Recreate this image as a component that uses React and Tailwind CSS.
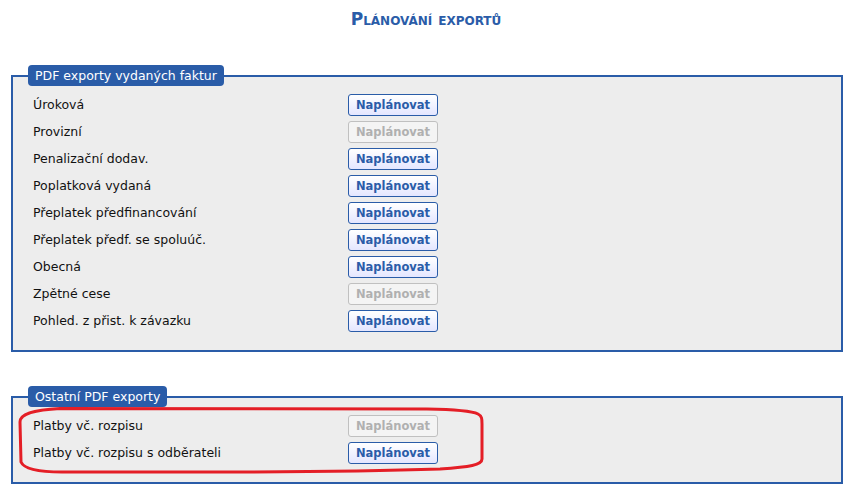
import React from "react";

const rows1 = [
  ["Úroková", true],
  ["Provizní", false],
  ["Penalizační dodav.", true],
  ["Poplatková vydaná", true],
  ["Přeplatek předfinancování", true],
  ["Přeplatek předf. se spoluúč.", true],
  ["Obecná", true],
  ["Zpětné cese", false],
  ["Pohled. z přist. k závazku", true],
];
const rows2 = [
  ["Platby vč. rozpisu", false],
  ["Platby vč. rozpisu s odběrateli", true],
];

function Btn({ enabled }) {
  return enabled ? (
    <button className="w-[90px] h-[22px] rounded-[3px] border border-[#2a5ca8] bg-gradient-to-b from-white to-[#e4e6ff] text-[#2a5ca8] font-bold text-[11.5px] leading-[20px]">
      Naplánovat
    </button>
  ) : (
    <button className="w-[90px] h-[22px] rounded-[3px] border border-[#c0c0c0] bg-[#f4f4f4] text-[#b0b0b0] font-bold text-[11.5px] leading-[20px]">
      Naplánovat
    </button>
  );
}

function Box({ title, rows, className }) {
  return (
    <fieldset
      className={
        "ml-[11px] mr-[9px] border-2 border-[#2a5ca8] bg-[#ededed] pl-[12px] pr-[12px] pt-[8px] pb-[18px] min-w-0 " +
        className
      }
    >
      <legend className="mx-[3px] h-[21px] px-[7px] rounded-[4px] bg-[#2a5ca8] text-white text-[12.5px] leading-[21px]">
        {title}
      </legend>
      <div className="flex flex-col gap-[5px] pl-[8px]">
        {rows.map(([label, en]) => (
          <div key={label} className="flex items-center h-[22px]">
            <div className="w-[315px] text-[12.5px] text-[#111]">{label}</div>
            <Btn enabled={en} />
          </div>
        ))}
      </div>
    </fieldset>
  );
}

export default function App() {
  return (
    <div
      className="relative w-[852px] h-[503px] bg-white overflow-hidden"
      style={{ fontFamily: '"DejaVu Sans", Verdana, sans-serif' }}
    >
      <div className="h-[65px] pt-[8px] text-center">
        <span className="text-[17px] leading-[22px] font-bold text-[#2a5ca8] [font-variant:small-caps]">
          Plánování exportů
        </span>
      </div>
      <Box title="PDF exporty vydaných faktur" rows={rows1} />
      <Box title="Ostatní PDF exporty" rows={rows2} className="mt-[34px]" />
      <svg
        className="absolute left-0 top-0 pointer-events-none"
        width="852"
        height="503"
        viewBox="0 0 852 503"
      >
        <path
          d="M 60 408.5 L 427 409 C 455 409.5, 472 411, 478 414 C 482 416, 482 419, 482 424 L 482 459 C 482 465, 470 467, 440 469 C 380 471, 300 472, 200 472 L 62 472 C 40 472, 24 469, 21 462 L 20 422 C 20 414, 32 410, 60 408.5 Z"
          fill="none"
          stroke="#e41e26"
          strokeWidth="3"
        />
      </svg>
    </div>
  );
}
